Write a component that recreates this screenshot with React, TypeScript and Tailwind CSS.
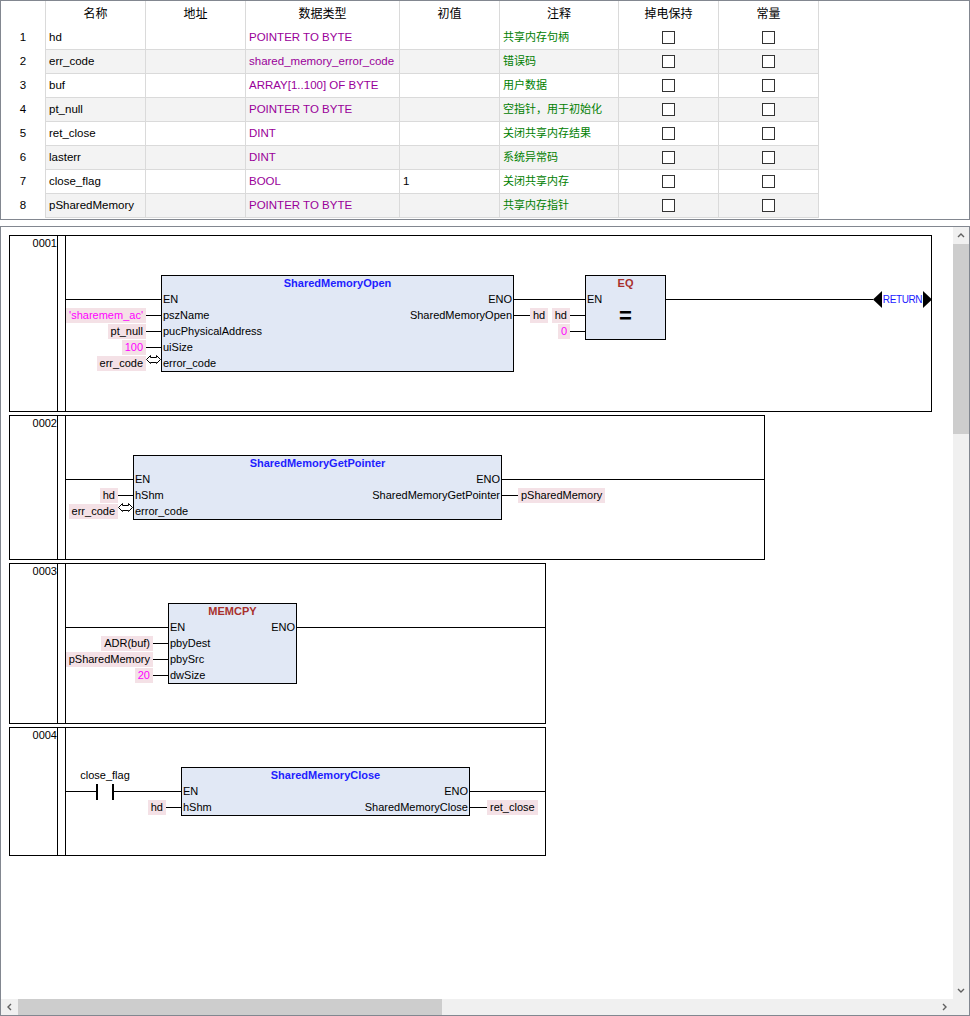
import React from "react";

type Item =
  | { k: "h"; x1: number; x2: number; y: number }
  | { k: "fb"; x: number; y: number; w: number; title: string; red?: boolean; ins: string[]; outs: string[]; eq?: boolean }
  | { k: "vin"; end: number; y: number; text: string; c?: boolean }
  | { k: "vout"; start: number; y: number; text: string; c?: boolean }
  | { k: "io"; x: number; y: number }
  | { k: "contact"; x: number; y: number; label: string }
  | { k: "ret"; x: number; y: number };

interface NetworkDef {
  no: string;
  top: number;
  right: number;
  size: string;
  items: Item[];
}

const vars = [
  { name: "hd", type: "POINTER TO BYTE", init: "", comment: "共享内存句柄" },
  { name: "err_code", type: "shared_memory_error_code", init: "", comment: "错误码" },
  { name: "buf", type: "ARRAY[1..100] OF BYTE", init: "", comment: "用户数据" },
  { name: "pt_null", type: "POINTER TO BYTE", init: "", comment: "空指针，用于初始化" },
  { name: "ret_close", type: "DINT", init: "", comment: "关闭共享内存结果" },
  { name: "lasterr", type: "DINT", init: "", comment: "系统异常码" },
  { name: "close_flag", type: "BOOL", init: "1", comment: "关闭共享内存" },
  { name: "pSharedMemory", type: "POINTER TO BYTE", init: "", comment: "共享内存指针" },
];

// coordinates below are page pixels, converted per network
const networks: NetworkDef[] = [
  {
    no: "0001",
    top: 235,
    right: 931,
    size: "w-[923px] h-[177px]",
    items: [
      { k: "h", x1: 66, x2: 161, y: 299 },
      {
        k: "fb", x: 161, y: 275, w: 353, title: "SharedMemoryOpen",
        ins: ["EN", "pszName", "pucPhysicalAddress", "uiSize", "error_code"],
        outs: ["ENO", "SharedMemoryOpen"],
      },
      { k: "vin", end: 146, y: 315, text: "'sharemem_ac'", c: true },
      { k: "h", x1: 146, x2: 161, y: 315 },
      { k: "vin", end: 146, y: 331, text: "pt_null" },
      { k: "h", x1: 146, x2: 161, y: 331 },
      { k: "vin", end: 146, y: 347, text: "100", c: true },
      { k: "h", x1: 146, x2: 161, y: 347 },
      { k: "vin", end: 146, y: 363, text: "err_code" },
      { k: "io", x: 146, y: 363 },
      { k: "h", x1: 514, x2: 585, y: 299 },
      { k: "h", x1: 514, x2: 530, y: 315 },
      { k: "vout", start: 530, y: 315, text: "hd" },
      { k: "vin", end: 570, y: 315, text: "hd" },
      { k: "h", x1: 570, x2: 585, y: 315 },
      { k: "vin", end: 570, y: 331, text: "0", c: true },
      { k: "h", x1: 570, x2: 585, y: 331 },
      { k: "fb", x: 585, y: 275, w: 81, title: "EQ", red: true, ins: ["EN", "", ""], outs: [], eq: true },
      { k: "h", x1: 666, x2: 873, y: 299 },
      { k: "ret", x: 873, y: 299 },
    ],
  },
  {
    no: "0002",
    top: 415,
    right: 764,
    size: "w-[756px] h-[145px]",
    items: [
      { k: "h", x1: 66, x2: 133, y: 479 },
      {
        k: "fb", x: 133, y: 455, w: 369, title: "SharedMemoryGetPointer",
        ins: ["EN", "hShm", "error_code"],
        outs: ["ENO", "SharedMemoryGetPointer"],
      },
      { k: "vin", end: 118, y: 495, text: "hd" },
      { k: "h", x1: 118, x2: 133, y: 495 },
      { k: "vin", end: 118, y: 511, text: "err_code" },
      { k: "io", x: 118, y: 511 },
      { k: "h", x1: 502, x2: 764, y: 479 },
      { k: "h", x1: 502, x2: 518, y: 495 },
      { k: "vout", start: 518, y: 495, text: "pSharedMemory" },
    ],
  },
  {
    no: "0003",
    top: 563,
    right: 545,
    size: "w-[537px] h-[161px]",
    items: [
      { k: "h", x1: 66, x2: 168, y: 627 },
      {
        k: "fb", x: 168, y: 603, w: 129, title: "MEMCPY", red: true,
        ins: ["EN", "pbyDest", "pbySrc", "dwSize"],
        outs: ["ENO"],
      },
      { k: "vin", end: 153, y: 643, text: "ADR(buf)" },
      { k: "h", x1: 153, x2: 168, y: 643 },
      { k: "vin", end: 153, y: 659, text: "pSharedMemory" },
      { k: "h", x1: 153, x2: 168, y: 659 },
      { k: "vin", end: 153, y: 675, text: "20", c: true },
      { k: "h", x1: 153, x2: 168, y: 675 },
      { k: "h", x1: 297, x2: 545, y: 627 },
    ],
  },
  {
    no: "0004",
    top: 727,
    right: 545,
    size: "w-[537px] h-[129px]",
    items: [
      { k: "h", x1: 66, x2: 96, y: 791 },
      { k: "contact", x: 96, y: 791, label: "close_flag" },
      { k: "h", x1: 114, x2: 181, y: 791 },
      {
        k: "fb", x: 181, y: 767, w: 289, title: "SharedMemoryClose",
        ins: ["EN", "hShm"],
        outs: ["ENO", "SharedMemoryClose"],
      },
      { k: "vin", end: 166, y: 807, text: "hd" },
      { k: "h", x1: 166, x2: 181, y: 807 },
      { k: "h", x1: 470, x2: 545, y: 791 },
      { k: "h", x1: 470, x2: 487, y: 807 },
      { k: "vout", start: 487, y: 807, text: "ret_close" },
    ],
  },
];

function Network({ no, top, right, size, items }: NetworkDef) {
  const L = (x: number) => x - 10;
  const T = (y: number) => y - top - 1;

  return (
    <div className={`relative flex shrink-0 border border-black bg-white ${size}`}>
      <div className="w-[48px] shrink-0 border-r border-black text-right leading-[15px]">{no}</div>
      <div className="w-[8px] shrink-0 border-r border-black" />
      {items.map((it, idx) => {
        switch (it.k) {
          case "h":
            return (
              <div
                key={idx}
                className="absolute h-px bg-black"
                style={{ left: L(it.x1), top: T(it.y), width: it.x2 - it.x1 }}
              />
            );
          case "fb": {
            const rows = Math.max(it.ins.length, it.outs.length);
            return (
              <div
                key={idx}
                className="absolute flex flex-col border border-black bg-[#e1e8f5]"
                style={{ left: L(it.x), top: T(it.y), width: it.w }}
              >
                <div
                  className={`h-[15px] whitespace-nowrap text-center font-bold leading-[15px] ${
                    it.red ? "text-[#a8302c]" : "text-[#1e1eff]"
                  }`}
                >
                  {it.title}
                </div>
                {Array.from({ length: rows }).map((_, i) => (
                  <div key={i} className="flex h-[16px] items-center justify-between whitespace-nowrap px-px leading-[16px]">
                    <span>{it.ins[i] ?? ""}</span>
                    <span>{it.outs[i] ?? ""}</span>
                  </div>
                ))}
                {it.eq && (
                  <div className="absolute inset-x-0 top-[29px] text-center text-[22px] font-bold leading-[22px]">=</div>
                )}
              </div>
            );
          }
          case "vin":
            return (
              <div
                key={idx}
                className={`absolute h-[15px] whitespace-nowrap bg-[#f4e1e6] px-[3px] leading-[15px] ${
                  it.c ? "text-[#ff00ff]" : "text-black"
                }`}
                style={{ right: right - it.end, top: T(it.y) - 7 }}
              >
                {it.text}
              </div>
            );
          case "vout":
            return (
              <div
                key={idx}
                className={`absolute h-[15px] whitespace-nowrap bg-[#f4e1e6] px-[3px] leading-[15px] ${
                  it.c ? "text-[#ff00ff]" : "text-black"
                }`}
                style={{ left: L(it.start), top: T(it.y) - 7 }}
              >
                {it.text}
              </div>
            );
          case "io":
            return (
              <svg
                key={idx}
                className="absolute"
                width="15"
                height="10"
                viewBox="0 0 15 10"
                style={{ left: L(it.x), top: T(it.y) - 8 }}
              >
                <path
                  d="M0.5 4.5 L4.5 0.5 V2.5 H10.5 V0.5 L14.5 4.5 L10.5 8.5 V7.5 H4.5 V8.5 Z"
                  fill="white"
                  stroke="black"
                  strokeWidth="1"
                />
              </svg>
            );
          case "contact":
            return (
              <React.Fragment key={idx}>
                <div
                  className="absolute w-[100px] text-center leading-[16px]"
                  style={{ left: L(it.x + 9) - 50, top: T(it.y - 16) - 8 }}
                >
                  {it.label}
                </div>
                <div className="absolute h-[16px] w-[2px] bg-black" style={{ left: L(it.x), top: T(it.y - 7) }} />
                <div className="absolute h-[16px] w-[2px] bg-black" style={{ left: L(it.x + 16), top: T(it.y - 7) }} />
              </React.Fragment>
            );
          case "ret":
            return (
              <React.Fragment key={idx}>
                <div
                  className="absolute flex h-[15px] w-[41px] justify-center whitespace-nowrap text-[10px] leading-[15px] tracking-[-0.4px] text-[#1a1aff]"
                  style={{ left: L(it.x + 9), top: T(it.y) - 7 }}
                >
                  RETURN
                </div>
                <svg
                  className="absolute"
                  width="59"
                  height="17"
                  viewBox="0 0 59 17"
                  style={{ left: L(it.x), top: T(it.y - 8) }}
                >
                  <polygon points="0,8.5 9,0 9,17" fill="black" />
                  <polygon points="50,0 59,8.5 50,17" fill="black" />
                </svg>
              </React.Fragment>
            );
        }
      })}
    </div>
  );
}

function Chevron({ dir }: { dir: "up" | "down" | "left" | "right" }) {
  const pts = {
    up: "1,5 4,2 7,5",
    down: "1,2 4,5 7,2",
    left: "5,1 2,4 5,7",
    right: "2,1 5,4 2,7",
  }[dir];
  return (
    <svg width="8" height="8" viewBox="0 0 8 8">
      <polyline points={pts} fill="none" stroke="#606060" strokeWidth="1.4" />
    </svg>
  );
}

function CheckBox() {
  return <div className="h-[13px] w-[13px] border border-[#333333] bg-white" />;
}

export default function App() {
  return (
    <div className="flex h-[1016px] w-[970px] flex-col overflow-hidden bg-white font-['Liberation_Sans','Noto_Sans_CJK_SC',sans-serif] text-[11px] text-black">
      {/* variable declaration table */}
      <div className="h-[220px] shrink-0 border border-[#828790]">
        <div className="flex h-[25px] text-[12px]">
          <div className="w-[45px] border-r border-[#dadada]" />
          <div className="flex w-[100px] items-center justify-center border-r border-[#dadada]">名称</div>
          <div className="flex w-[100px] items-center justify-center border-r border-[#dadada]">地址</div>
          <div className="flex w-[154px] items-center justify-center border-r border-[#dadada]">数据类型</div>
          <div className="flex w-[100px] items-center justify-center border-r border-[#dadada]">初值</div>
          <div className="flex w-[119px] items-center justify-center border-r border-[#dadada]">注释</div>
          <div className="flex w-[100px] items-center justify-center border-r border-[#dadada]">掉电保持</div>
          <div className="flex w-[100px] items-center justify-center border-r border-[#dadada]">常量</div>
        </div>
        {vars.map((v, i) => (
          <div key={v.name} className="flex h-[24px] text-[11.5px]">
            <div className="flex w-[45px] items-center justify-center border-r border-[#dadada]">{i + 1}</div>
            <div className={`flex border-b border-[#dadada] ${i % 2 === 1 ? "bg-[#f3f3f3]" : "bg-white"}`}>
              <div className="flex w-[100px] items-center border-r border-[#dadada] pl-[3px]">{v.name}</div>
              <div className="w-[100px] border-r border-[#dadada]" />
              <div className="flex w-[154px] items-center whitespace-nowrap border-r border-[#dadada] pl-[3px] text-[#990099]">
                {v.type}
              </div>
              <div className="flex w-[100px] items-center border-r border-[#dadada] pl-[3px]">{v.init}</div>
              <div className="flex w-[119px] items-center whitespace-nowrap border-r border-[#dadada] pl-[3px] text-[11px] text-[#008000]">
                {v.comment}
              </div>
              <div className="flex w-[100px] items-center justify-center border-r border-[#dadada]">
                <CheckBox />
              </div>
              <div className="flex w-[100px] items-center justify-center border-r border-[#dadada]">
                <CheckBox />
              </div>
            </div>
          </div>
        ))}
      </div>

      <div className="h-[6px] shrink-0" />

      {/* ladder editor */}
      <div className="flex h-[790px] shrink-0 flex-col border border-[#828790]">
        <div className="flex min-h-0 flex-1">
          <div className="flex min-w-0 flex-1 flex-col gap-[3px] overflow-hidden pl-[8px] pt-[8px]">
            {networks.map((n) => (
              <Network key={n.no} {...n} />
            ))}
          </div>
          <div className="flex w-[16px] shrink-0 flex-col bg-[#f0f0f0]">
            <div className="flex h-[17px] items-center justify-center">
              <Chevron dir="up" />
            </div>
            <div className="h-[190px] bg-[#cdcdcd]" />
            <div className="flex-1" />
            <div className="flex h-[17px] items-center justify-center">
              <Chevron dir="down" />
            </div>
          </div>
        </div>
        <div className="flex h-[16px] shrink-0 bg-[#f0f0f0]">
          <div className="flex w-[17px] items-center justify-center">
            <Chevron dir="left" />
          </div>
          <div className="w-[424px] bg-[#cdcdcd]" />
          <div className="flex-1" />
          <div className="flex w-[17px] items-center justify-center">
            <Chevron dir="right" />
          </div>
          <div className="w-[16px]" />
        </div>
      </div>
    </div>
  );
}
